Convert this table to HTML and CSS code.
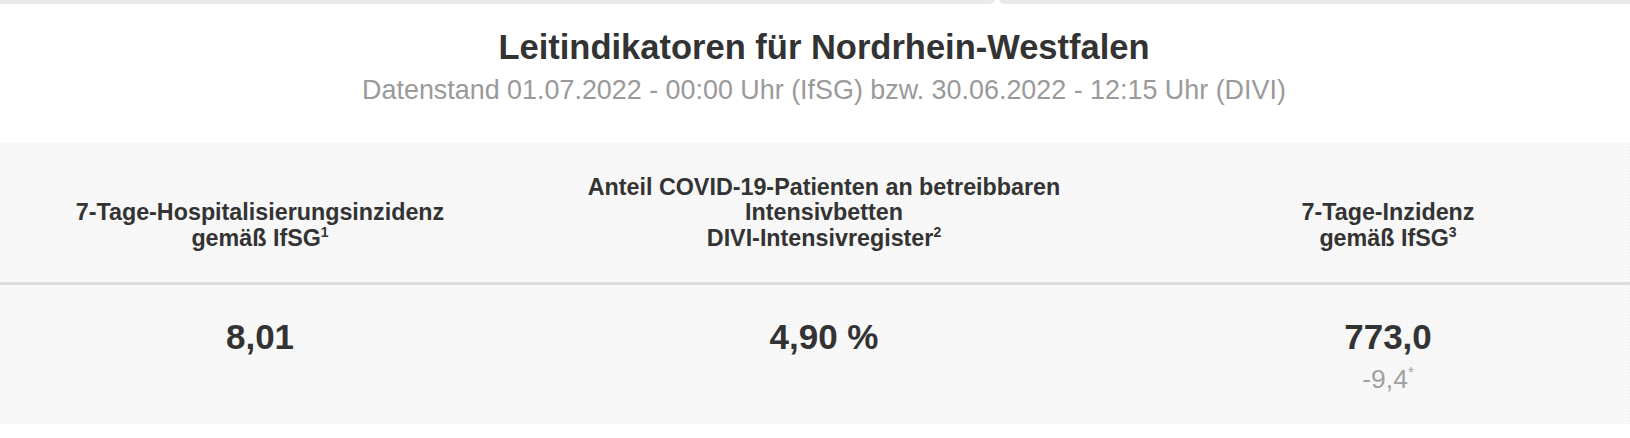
FILE: index.html
```html
<!DOCTYPE html>
<html lang="de">
<head>
<meta charset="utf-8">
<title>Leitindikatoren für Nordrhein-Westfalen</title>
<link rel="stylesheet" href="styles.css">
</head>
<body>
<div class="page">
  <div class="frame">
    <div class="tab-edge">
      <svg class="notch" width="20" height="5" viewBox="0 0 20 5" aria-hidden="true"><path d="M0 5 C4 5 6 4.5 8 1.5 C9 0 11 0 12 1.5 C14 4.5 16 5 20 5 Z" fill="#ffffff"/></svg>
    </div>
    <header class="intro">
      <h1 class="intro-title">Leitindikatoren für Nordrhein-Westfalen</h1>
      <p class="intro-date">Datenstand 01.07.2022 - 00:00 Uhr (IfSG) bzw. 30.06.2022 - 12:15 Uhr (DIVI)</p>
    </header>
    <section class="indicators">
      <div class="ind-row ind-head">
        <div class="ind-cell">7-Tage-Hospitalisierungsinzidenz<br>gemäß IfSG<sup>1</sup></div>
        <div class="ind-cell">Anteil COVID-19-Patienten an betreibbaren<br>Intensivbetten<br>DIVI-Intensivregister<sup>2</sup></div>
        <div class="ind-cell">7-Tage-Inzidenz<br>gemäß IfSG<sup>3</sup></div>
      </div>
      <div class="ind-row ind-values">
        <div class="ind-cell"><div class="ind-value">8,01</div></div>
        <div class="ind-cell"><div class="ind-value">4,90 %</div></div>
        <div class="ind-cell"><div class="ind-value">773,0</div><div class="ind-change">-9,4<sup>*</sup></div></div>
      </div>
    </section>
  </div>
</div>
</body>
</html>
```
FILE: styles.css
```css
html, body {
  margin: 0;
  padding: 0;
  background: #ffffff;
}
body {
  font-family: "Liberation Sans", Arial, sans-serif;
  color: #333333;
}
.page {
  overflow: hidden;
}
.frame {
  margin: 0 -40px 0 -22px;
}
.tab-edge {
  position: relative;
  height: 4px;
  background: #e9e9e9;
}
.notch {
  position: absolute;
  left: 1009px;
  top: -1px;
  display: block;
}
.intro {
  height: 139px;
  box-sizing: border-box;
  padding-top: 26px;
  text-align: center;
}
.intro-title {
  margin: 0;
  font-size: 34.5px;
  line-height: 34px;
  font-weight: bold;
  color: #333333;
}
.intro-date {
  margin: 11px 0 0;
  font-size: 26.9px;
  line-height: 30px;
  color: #9a9a9a;
}
.indicators {
  background-color: #f8f8f8;
  background-image: radial-gradient(circle, #f1f1f1 0.7px, transparent 1px);
  background-size: 3px 3px;
}
.ind-row {
  display: grid;
  grid-template-columns: repeat(3, 1fr);
  height: 139px;
  box-sizing: border-box;
}
.ind-head {
  align-items: end;
  padding-bottom: 31px;
  border-bottom: 3px solid #dddddd;
  height: 142px;
}
.ind-head .ind-cell {
  text-align: center;
  font-size: 23.3px;
  line-height: 25.5px;
  font-weight: bold;
  color: #333333;
}
.ind-head sup {
  font-size: 14px;
  line-height: 0;
  vertical-align: 9px;
}
.ind-values {
  align-items: start;
  padding-top: 32px;
}
.ind-values .ind-cell {
  text-align: center;
}
.ind-value {
  font-size: 35px;
  line-height: 40px;
  font-weight: bold;
  color: #333333;
}
.ind-change {
  margin-top: 7px;
  font-size: 26.5px;
  line-height: 30px;
  color: #a0a0a0;
}
.ind-change sup {
  font-size: 15px;
  line-height: 0;
  vertical-align: 11px;
}
```
